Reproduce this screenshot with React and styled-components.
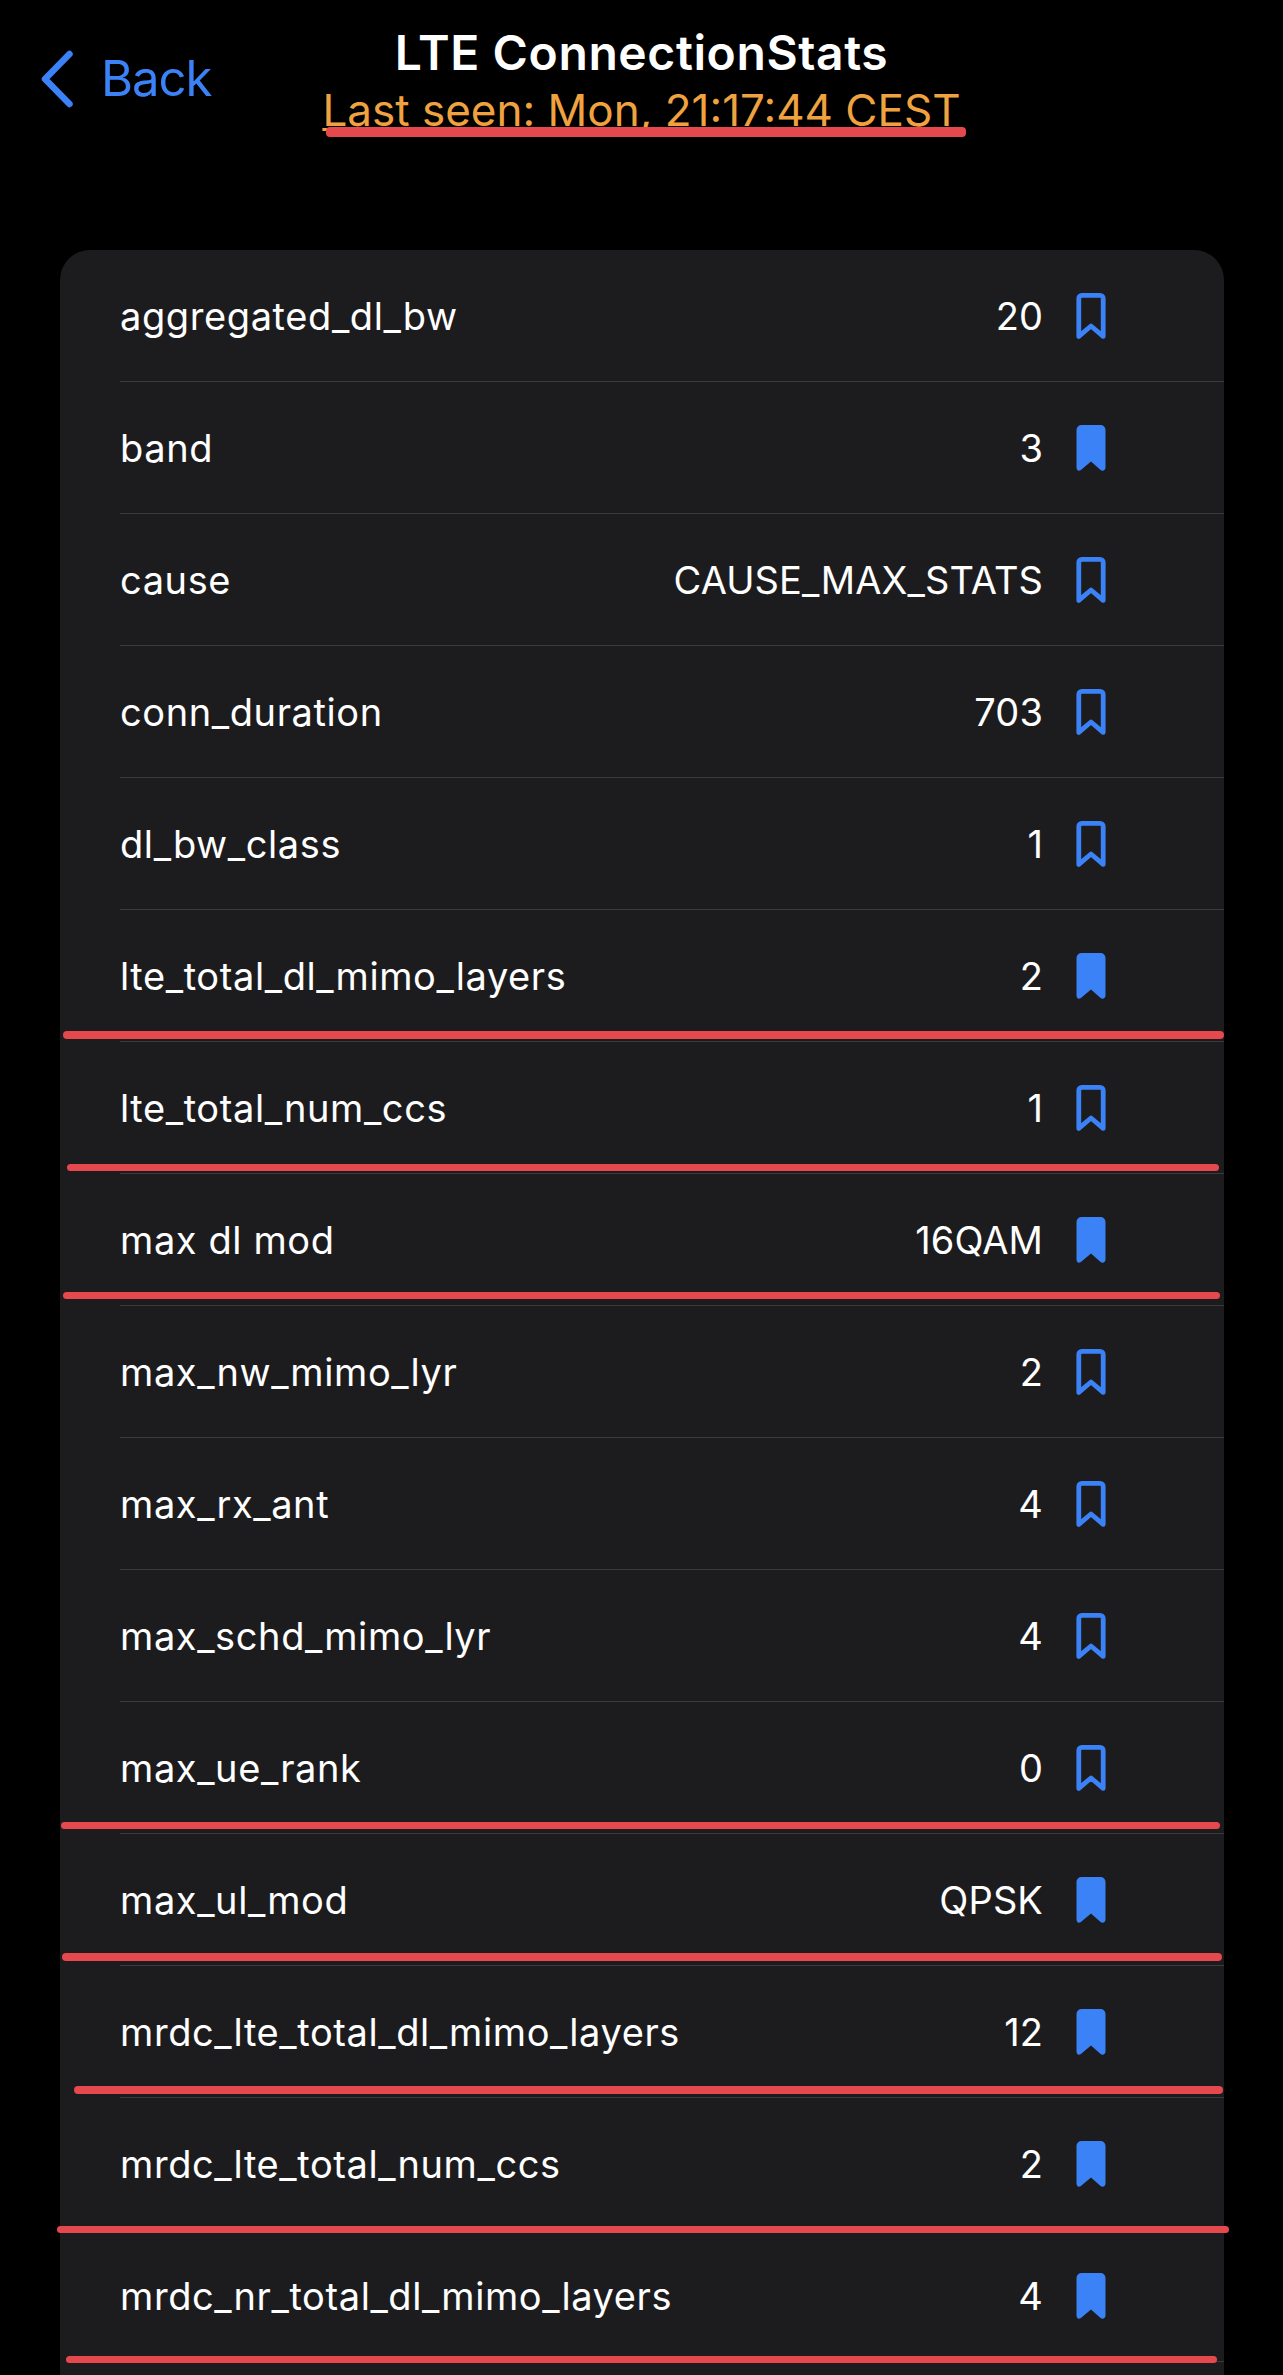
import React from 'react';
import styled, { createGlobalStyle } from 'styled-components';

const rows = [
  ['aggregated_dl_bw', '20', false],
  ['band', '3', true],
  ['cause', 'CAUSE_MAX_STATS', false],
  ['conn_duration', '703', false],
  ['dl_bw_class', '1', false],
  ['lte_total_dl_mimo_layers', '2', true],
  ['lte_total_num_ccs', '1', false],
  ['max dl mod', '16QAM', true],
  ['max_nw_mimo_lyr', '2', false],
  ['max_rx_ant', '4', false],
  ['max_schd_mimo_lyr', '4', false],
  ['max_ue_rank', '0', false],
  ['max_ul_mod', 'QPSK', true],
  ['mrdc_lte_total_dl_mimo_layers', '12', true],
  ['mrdc_lte_total_num_ccs', '2', true],
  ['mrdc_nr_total_dl_mimo_layers', '4', true],
];

// red pen strokes drawn over the screenshot
const marks = [
  { left: 326, right: 966, top: 127, height: 10 },
  { left: 63, right: 1224, top: 1031, height: 8 },
  { left: 67, right: 1219, top: 1164, height: 7 },
  { left: 63, right: 1220, top: 1292, height: 7 },
  { left: 61, right: 1220, top: 1822, height: 7 },
  { left: 62, right: 1222, top: 1953, height: 8 },
  { left: 74, right: 1223, top: 2086, height: 8 },
  { left: 57, right: 1229, top: 2226, height: 7 },
  { left: 66, right: 1217, top: 2356, height: 7 },
];

const BookmarkIcon = ({ filled }) => (
  <Bookmark viewBox="0 0 30 46">
    {filled ? (
      <path
        d="M5.5 0H24.5a5 5 0 0 1 5 5V42.5c0 2.8-2.8 4.2-4.9 2.4L15 36.5 4.9 44.9C2.8 46.7.5 45.3.5 42.5V5a5 5 0 0 1 5-5z"
        fill="#3b82f6"
      />
    ) : (
      <path
        d="M5.8 2.4H24.2a3 3 0 0 1 3 3V43.4L15 33 2.8 43.4V5.4a3 3 0 0 1 3-3z"
        fill="none"
        stroke="#3b82f6"
        strokeWidth="4.8"
        strokeLinejoin="round"
        strokeLinecap="round"
      />
    )}
  </Bookmark>
);

const App = () => {
  return (
    <Page>
      <GlobalStyle />
      <Header>
        <BackLink>
          <svg width="34" height="58" viewBox="0 0 34 58">
            <path
              d="M29.5 4 5 29l24.5 25"
              fill="none"
              stroke="#3b82f6"
              strokeWidth="6.5"
              strokeLinecap="round"
              strokeLinejoin="round"
            />
          </svg>
          <BackText>Back</BackText>
        </BackLink>
        <TitleBlock>
          <Title>LTE ConnectionStats</Title>
          <LastSeen>Last seen: Mon, 21:17:44 CEST</LastSeen>
        </TitleBlock>
      </Header>
      <Card>
        {rows.map(([name, value, filled]) => (
          <Row key={name}>
            <Label>{name}</Label>
            <Value>{value}</Value>
            <BookmarkIcon filled={filled} />
          </Row>
        ))}
      </Card>
      {marks.map((m) => (
        <PenMark
          key={m.top}
          $left={m.left}
          $width={m.right - m.left}
          $top={m.top}
          $height={m.height}
        />
      ))}
    </Page>
  );
};

export default App;

const GlobalStyle = createGlobalStyle`
  body {
    margin: 0;
    background: #000;
  }
`;

const Page = styled.div`
  position: relative;
  display: flex;
  flex-direction: column;
  height: 2375px;
  overflow: hidden;
  background: #000;
  color: #fff;
  font-family: Inter, "Liberation Sans", sans-serif;
`;

const Header = styled.header`
  display: grid;
  grid-template-columns: 1fr auto 1fr;
  height: 250px;
  padding: 0 40px;
  box-sizing: border-box;
`;

const BackLink = styled.a`
  display: flex;
  align-items: center;
  gap: 27px;
  height: 58px;
  margin-top: 50px;
  color: #3b82f6;
`;

const BackText = styled.span`
  font-size: 49px;
  letter-spacing: -1px;
  line-height: 58px;
`;

const TitleBlock = styled.div`
  display: flex;
  flex-direction: column;
  align-items: center;
  padding-top: 24px;
`;

const Title = styled.div`
  font-size: 48px;
  font-weight: 600;
  line-height: 58px;
  letter-spacing: 0.6px;
`;

const LastSeen = styled.div`
  margin-top: 1px;
  font-size: 44px;
  line-height: 54px;
  letter-spacing: 0;
  color: #efa23f;
  text-decoration: underline;
  text-decoration-thickness: 3px;
`;

const Card = styled.main`
  flex: 1;
  margin: 0 59px 0 60px;
  padding-left: 60px;
  background: #1c1c1e;
  border-radius: 30px 30px 0 0;
`;

const Row = styled.div`
  display: flex;
  align-items: center;
  height: 132px;
  padding-right: 118px;
  box-sizing: border-box;
  border-bottom: 1px solid #3c3c3f;
`;

const Label = styled.span`
  flex: 1;
  font-size: 38px;
  letter-spacing: 0.6px;
`;

const Value = styled.span`
  font-size: 38px;
  letter-spacing: 0.1px;
`;

const Bookmark = styled.svg`
  flex: none;
  width: 30px;
  height: 46px;
  margin-left: 33px;
`;

const PenMark = styled.div`
  position: absolute;
  left: ${(p) => p.$left}px;
  top: ${(p) => p.$top}px;
  width: ${(p) => p.$width}px;
  height: ${(p) => p.$height}px;
  border-radius: 4px;
  background: #e5484d;
`;
